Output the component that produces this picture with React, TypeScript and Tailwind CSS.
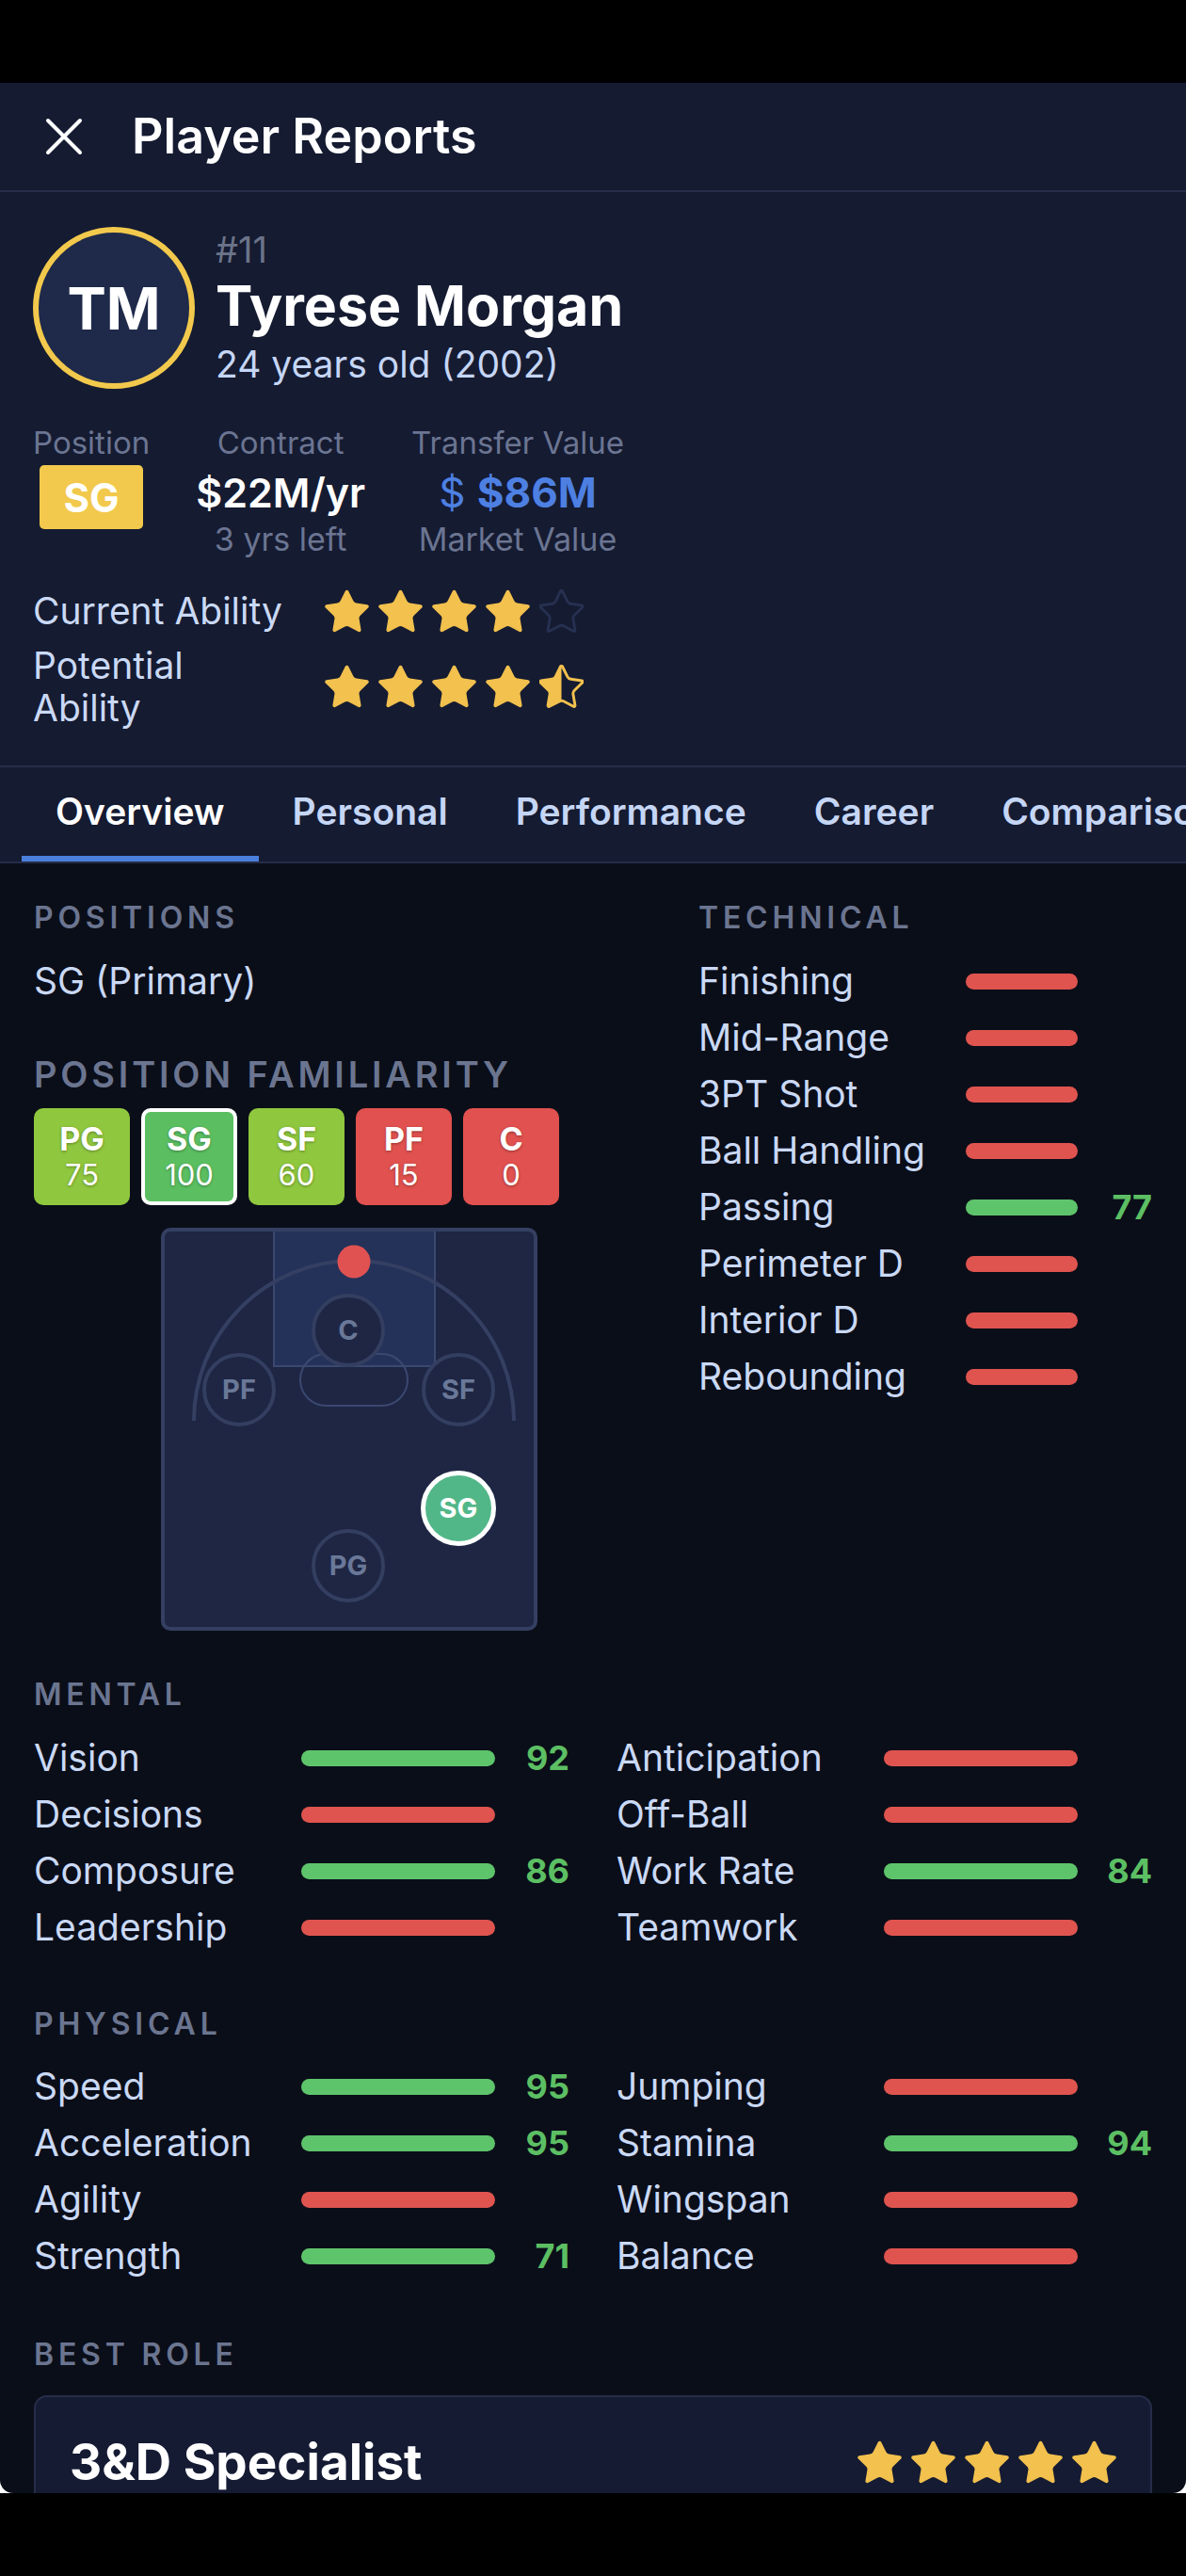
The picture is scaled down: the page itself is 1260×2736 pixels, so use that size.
import React from "react";

const STAR_PATH =
  "M11.525 2.295a.53.53 0 0 1 .95 0l2.31 4.679a2.123 2.123 0 0 0 1.595 1.16l5.166.756a.53.53 0 0 1 .294.904l-3.736 3.638a2.123 2.123 0 0 0-.611 1.878l.882 5.14a.53.53 0 0 1-.771.56l-4.618-2.428a2.122 2.122 0 0 0-1.973 0L6.396 21.01a.53.53 0 0 1-.77-.56l.881-5.139a2.122 2.122 0 0 0-.611-1.879L2.16 9.795a.53.53 0 0 1 .294-.906l5.165-.755a2.122 2.122 0 0 0 1.597-1.16z";

type StarKind = "full" | "half" | "empty";

const Star = ({ kind, size = 47 }: { kind: StarKind; size?: number }) => {
  if (kind === "empty") {
    return (
      <svg width={size} height={size} viewBox="1.6 1.4 20.8 20.8">
        <path d={STAR_PATH} fill="none" stroke="#263050" strokeWidth="1.3" strokeLinejoin="round" />
      </svg>
    );
  }
  if (kind === "half") {
    return (
      <svg width={size} height={size} viewBox="1.6 1.4 20.8 20.8">
        <defs>
          <clipPath id="half-star-clip">
            <rect x="0" y="0" width="12" height="24" />
          </clipPath>
        </defs>
        <path d={STAR_PATH} fill="none" stroke="#f2c14e" strokeWidth="1.3" strokeLinejoin="round" />
        <path d={STAR_PATH} fill="#f2c14e" clipPath="url(#half-star-clip)" />
      </svg>
    );
  }
  return (
    <svg width={size} height={size} viewBox="1.6 1.4 20.8 20.8">
      <path d={STAR_PATH} fill="#f2c14e" stroke="#f2c14e" strokeWidth="0.6" strokeLinejoin="round" />
    </svg>
  );
};

const Stars = ({ kinds }: { kinds: StarKind[] }) => (
  <div className="flex items-center gap-[10px]">
    {kinds.map((k, i) => (
      <Star key={i} kind={k} />
    ))}
  </div>
);

type Attr = { name: string; value?: number };

const AttrRow = ({ attr }: { attr: Attr }) => (
  <div className="flex h-[60px] items-center">
    <div className="w-[284px] shrink-0 text-[39px] text-[#cad9f5]">{attr.name}</div>
    <div
      className={
        attr.value
          ? "h-[17px] flex-1 rounded-full bg-[#5ec46b]"
          : "h-[17px] flex-1 rounded-full bg-[#df544f]"
      }
    />
    <div className="w-[79px] shrink-0 text-right text-[36px] font-bold text-[#5cbf63]">
      {attr.value ?? ""}
    </div>
  </div>
);

const SectionLabel = ({ children }: { children: React.ReactNode }) => (
  <div className="h-[40px] text-[32px] leading-[40px] font-semibold tracking-[0.15em] text-[#6b7590]">
    {children}
  </div>
);

const technical: Attr[] = [
  { name: "Finishing" },
  { name: "Mid-Range" },
  { name: "3PT Shot" },
  { name: "Ball Handling" },
  { name: "Passing", value: 77 },
  { name: "Perimeter D" },
  { name: "Interior D" },
  { name: "Rebounding" },
];

const mentalLeft: Attr[] = [
  { name: "Vision", value: 92 },
  { name: "Decisions" },
  { name: "Composure", value: 86 },
  { name: "Leadership" },
];
const mentalRight: Attr[] = [
  { name: "Anticipation" },
  { name: "Off-Ball" },
  { name: "Work Rate", value: 84 },
  { name: "Teamwork" },
];
const physicalLeft: Attr[] = [
  { name: "Speed", value: 95 },
  { name: "Acceleration", value: 95 },
  { name: "Agility" },
  { name: "Strength", value: 71 },
];
const physicalRight: Attr[] = [
  { name: "Jumping" },
  { name: "Stamina", value: 94 },
  { name: "Wingspan" },
  { name: "Balance" },
];

const familiarity = [
  { pos: "PG", val: 75, color: "bg-[#8fc73e]", active: false },
  { pos: "SG", val: 100, color: "bg-[#5bbf61]", active: true },
  { pos: "SF", val: 60, color: "bg-[#8fc73e]", active: false },
  { pos: "PF", val: 15, color: "bg-[#e0514f]", active: false },
  { pos: "C", val: 0, color: "bg-[#e0514f]", active: false },
];

const tabs = ["Overview", "Personal", "Performance", "Career", "Comparison"];

const Marker = ({ label, className }: { label: string; className: string }) => (
  <div
    className={
      "absolute flex h-[78px] w-[78px] items-center justify-center rounded-full border-4 border-[#333e60] bg-[#1e2644] text-[29px] font-bold text-[#6a7898] " +
      className
    }
  >
    {label}
  </div>
);

const Court = () => (
  <div className="relative mx-auto h-[428px] w-[400px] rounded-[10px] border-4 border-[#343f62] bg-[#1e2644]">
    <svg className="absolute left-0 top-0" width="392" height="420" viewBox="0 0 392 420">
      <rect x="116" y="-2" width="171" height="145" fill="#243159" stroke="#3b4870" strokeWidth="2" />
      <path d="M31 201 A170 170 0 0 1 371 201" fill="none" stroke="#343f62" strokeWidth="4" />
      <rect x="144" y="130" width="114" height="55" rx="27.5" fill="none" stroke="#3b4870" strokeWidth="2" />
      <circle cx="201" cy="32" r="17.5" fill="#e05252" />
    </svg>
    <Marker label="C" className="left-[156px] top-[66px]" />
    <Marker label="PF" className="left-[40px] top-[129px]" />
    <Marker label="SF" className="left-[273px] top-[129px]" />
    <Marker label="PG" className="left-[156px] top-[316px]" />
    <div className="absolute left-[272px] top-[254px] flex h-[80px] w-[80px] items-center justify-center rounded-full border-[5px] border-white bg-[#52b788] text-[29px] font-bold text-white">
      SG
    </div>
  </div>
);

const App = () => {
  return (
    <div className="min-h-[2736px] bg-white font-['Inter','Noto_Sans',sans-serif]">
      <div className="h-[88px] bg-black" />
      <div className="h-[2560px] overflow-hidden rounded-b-[14px] bg-[#0a0e19]">
        {/* title bar */}
        <div className="flex h-[116px] items-center border-b-2 border-[#262d48] bg-[#151b31] px-[48px]">
          <svg width="40" height="40" viewBox="0 0 40 40">
            <path d="M3 3 37 37 M37 3 3 37" stroke="white" strokeWidth="4" strokeLinecap="round" />
          </svg>
          <h1 className="ml-[52px] text-[52px] font-semibold text-white">Player Reports</h1>
        </div>

        {/* player header */}
        <div className="border-b-2 border-[#262d48] bg-[#151b31] px-[35px] pt-[37px] pb-[39px]">
          <div className="flex items-center">
            <div className="flex h-[172px] w-[172px] shrink-0 items-center justify-center rounded-full border-[6px] border-[#f2c94c] bg-[#1f2a4a] text-[62px] font-bold text-white">
              TM
            </div>
            <div className="ml-[22px] flex flex-col">
              <div className="text-[38px] leading-[44px] text-[#6b7489]">#11</div>
              <div className="text-[59px] leading-[76px] font-bold text-white">Tyrese Morgan</div>
              <div className="text-[39px] leading-[48px] text-[#c5d6f5]">24 years old (2002)</div>
            </div>
          </div>

          <div className="mt-[39px] flex gap-[49px]">
            <div className="flex flex-col items-center">
              <div className="h-[36px] text-[33px] leading-[36px] text-[#6b7592]">Position</div>
              <div className="mt-[6px] flex h-[68px] w-[110px] items-center justify-center rounded-[5px] bg-[#f2c94c] text-[42px] font-bold text-white">
                SG
              </div>
            </div>
            <div className="flex flex-col items-center">
              <div className="h-[36px] text-[33px] leading-[36px] text-[#6b7592]">Contract</div>
              <div className="h-[70px] text-[43px] leading-[70px] font-semibold text-white">$22M/yr</div>
              <div className="h-[30px] text-[34px] leading-[30px] text-[#6b7592]">3 yrs left</div>
            </div>
            <div className="flex flex-col items-center">
              <div className="h-[36px] text-[33px] leading-[36px] text-[#6b7592]">Transfer Value</div>
              <div className="h-[70px] text-[44px] leading-[70px] text-[#4d80e2]">
                <span className="font-normal">$ </span>
                <span className="font-bold">$86M</span>
              </div>
              <div className="h-[30px] text-[34px] leading-[30px] text-[#6b7592]">Market Value</div>
            </div>
          </div>

          <div className="mt-[33px] flex h-[56px] items-center">
            <div className="w-[270px] shrink-0 text-[39px] text-[#cad9f5]">Current Ability</div>
            <div className="ml-[40px]">
              <Stars kinds={["full", "full", "full", "full", "empty"]} />
            </div>
          </div>
          <div className="mt-[7px] flex items-center">
            <div className="w-[270px] shrink-0 text-[39px] leading-[45px] text-[#cad9f5]">
              Potential Ability
            </div>
            <div className="ml-[40px]">
              <Stars kinds={["full", "full", "full", "full", "half"]} />
            </div>
          </div>
        </div>

        {/* tabs */}
        <div className="flex h-[102px] overflow-hidden border-b-2 border-[#262d48] bg-[#151b31] pl-[23px] whitespace-nowrap">
          {tabs.map((t, i) => (
            <div key={t} className="relative shrink-0 px-[36px] pt-[24px]">
              <div
                className={
                  i === 0
                    ? "text-[39px] leading-[46px] font-semibold text-white"
                    : "text-[39px] leading-[46px] font-semibold text-[#c5d6f5]"
                }
              >
                {t}
              </div>
              {i === 0 && <div className="absolute bottom-0 left-0 h-[6px] w-full bg-[#4a7fdc]" />}
            </div>
          ))}
        </div>

        {/* overview content */}
        <div className="px-[36px] pt-[38px]">
          <div className="flex gap-[36px]">
            <div className="flex-1">
              <SectionLabel>POSITIONS</SectionLabel>
              <div className="mt-[17px] h-[60px] text-[39px] leading-[60px] text-[#cad9f5]">SG (Primary)</div>
              <div className="mt-[47px] h-[44px] text-[38px] leading-[44px] font-semibold tracking-[0.1em] text-[#6b7590]">
                POSITION FAMILIARITY
              </div>
              <div className="mt-[14px] flex gap-[12px]">
                {familiarity.map((f) => (
                  <div
                    key={f.pos}
                    className={
                      "flex h-[103px] w-[102px] flex-col items-center justify-center rounded-[10px] text-white [text-shadow:0_1px_3px_rgba(0,0,0,0.35)] " +
                      f.color +
                      (f.active ? " border-4 border-white" : "")
                    }
                  >
                    <div className="text-[34px] leading-[38px] font-bold">{f.pos}</div>
                    <div className="text-[31px] leading-[38px]">{f.val}</div>
                  </div>
                ))}
              </div>
              <div className="mt-[24px]">
                <Court />
              </div>
            </div>
            <div className="w-[482px] shrink-0">
              <SectionLabel>TECHNICAL</SectionLabel>
              <div className="mt-[17px]">
                {technical.map((a) => (
                  <AttrRow key={a.name} attr={a} />
                ))}
              </div>
            </div>
          </div>

          <div className="mt-[48px]">
            <SectionLabel>MENTAL</SectionLabel>
            <div className="mt-[17px] grid grid-cols-2 gap-x-[50px]">
              <div>
                {mentalLeft.map((a) => (
                  <AttrRow key={a.name} attr={a} />
                ))}
              </div>
              <div>
                {mentalRight.map((a) => (
                  <AttrRow key={a.name} attr={a} />
                ))}
              </div>
            </div>
          </div>

          <div className="mt-[53px]">
            <SectionLabel>PHYSICAL</SectionLabel>
            <div className="mt-[16px] grid grid-cols-2 gap-x-[50px]">
              <div>
                {physicalLeft.map((a) => (
                  <AttrRow key={a.name} attr={a} />
                ))}
              </div>
              <div>
                {physicalRight.map((a) => (
                  <AttrRow key={a.name} attr={a} />
                ))}
              </div>
            </div>
          </div>

          <div className="mt-[55px]">
            <SectionLabel>BEST ROLE</SectionLabel>
            <div className="mt-[23px] rounded-[14px] border-2 border-[#262d48] bg-[#151b33] px-[36px] pt-[36px] pb-[36px]">
              <div className="flex items-center justify-between">
                <div className="text-[53px] leading-[66px] font-bold text-white">3&amp;D Specialist</div>
                <Stars kinds={["full", "full", "full", "full", "full"]} />
              </div>
            </div>
          </div>
        </div>
      </div>
      <div className="h-[88px] bg-black" />
    </div>
  );
};

export default App;
